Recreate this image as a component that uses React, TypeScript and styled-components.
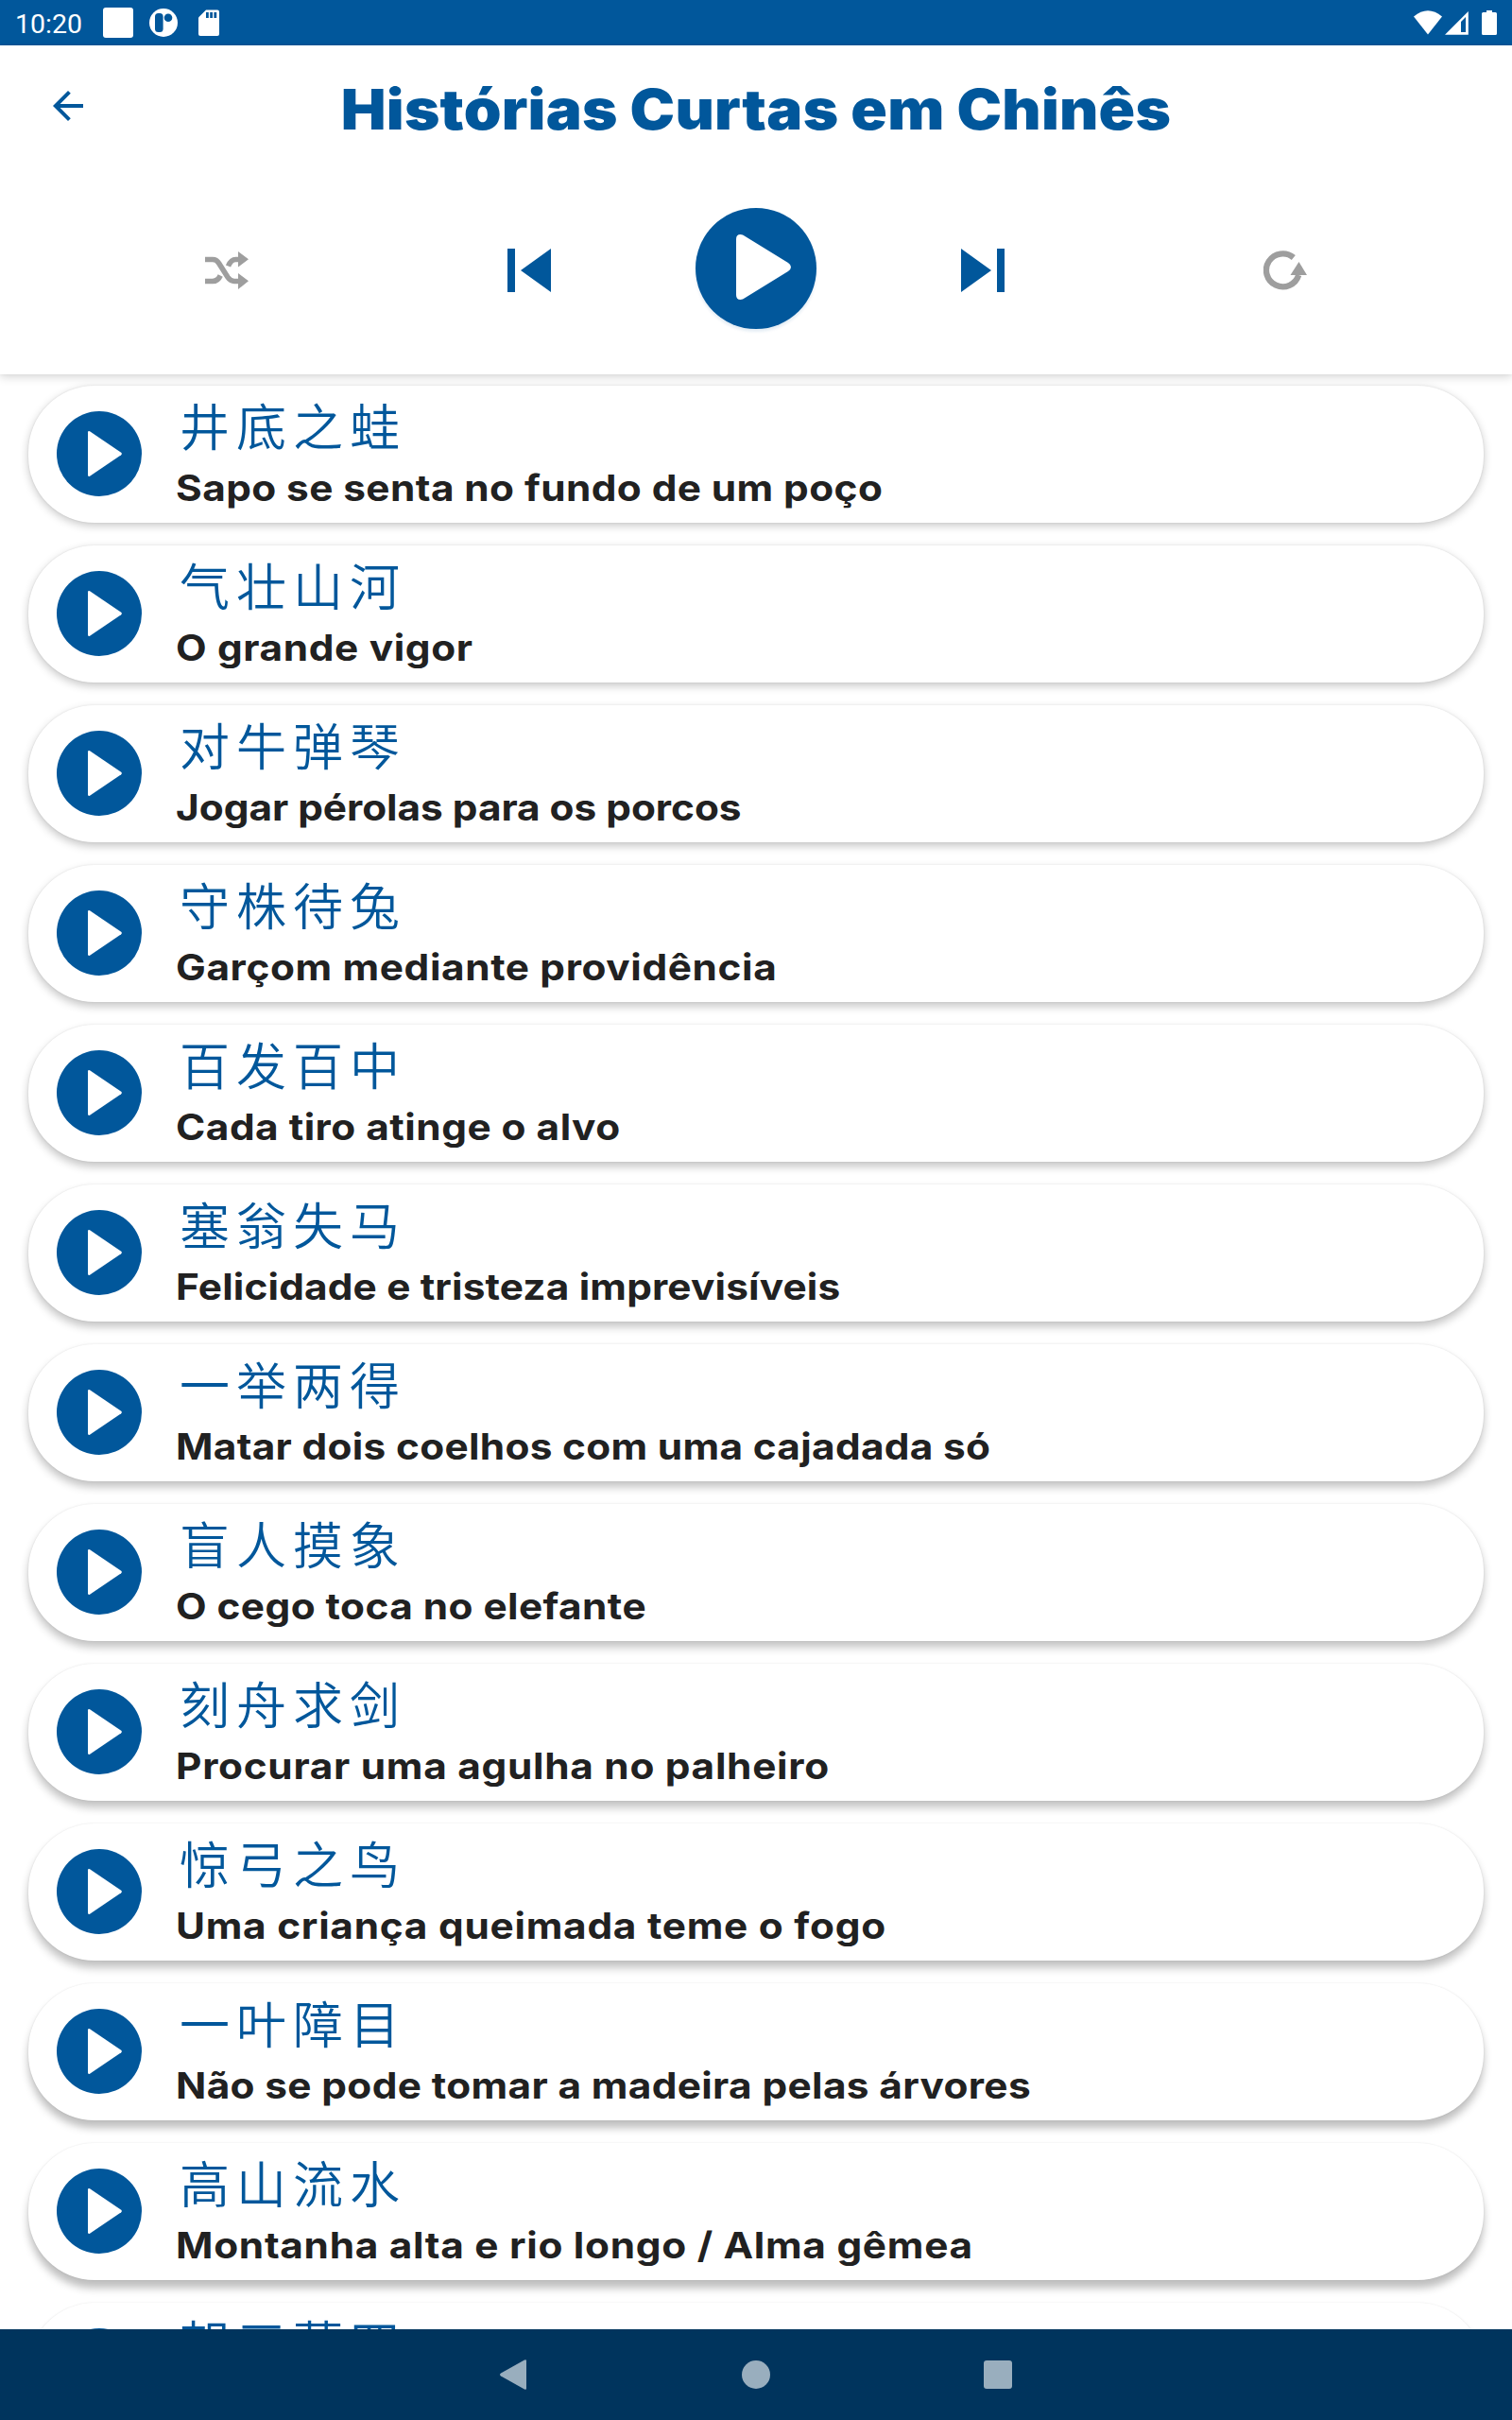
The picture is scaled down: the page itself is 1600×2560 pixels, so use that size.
import styled, { createGlobalStyle } from 'styled-components';

const blue = '#01579b';

const GlobalStyle = createGlobalStyle`
  * {
    box-sizing: border-box;
  }
  body {
    margin: 0;
    background: #fff;
  }
  svg {
    display: block;
  }
`;

const Screen = styled.div`
  width: 1600px;
  height: 2560px;
  display: flex;
  flex-direction: column;
  overflow: hidden;
  background: #fff;
  font-family: Inter, 'Noto Sans CJK SC', sans-serif;
`;

const StatusBar = styled.div`
  flex: none;
  height: 48px;
  padding: 0 16px;
  display: flex;
  align-items: center;
  justify-content: space-between;
  background: ${blue};
  color: #fff;
`;

const StatusGroup = styled.div`
  display: flex;
  align-items: center;
`;

const Clock = styled.span`
  width: 93px;
  font-family: Roboto, sans-serif;
  font-size: 28.5px;
  line-height: 48px;
  padding-top: 3px;
`;

const Header = styled.header`
  flex: none;
  height: 348px;
  z-index: 1;
  background: #fff;
  box-shadow: 0 3px 9px rgba(0, 0, 0, 0.16), 0 0 2px rgba(0, 0, 0, 0.06);
`;

const TitleRow = styled.div`
  height: 132px;
  padding: 0 48px;
  display: grid;
  grid-template-columns: 48px 1fr 48px;
  align-items: start;
`;

const BackButton = styled.button`
  margin: 40px 0 0;
  padding: 0;
  width: 48px;
  height: 48px;
  border: 0;
  background: none;
  color: ${blue};
`;

const Title = styled.h1`
  margin: 34px 0 0;
  font-size: 59px;
  line-height: 68px;
  font-weight: 900;
  letter-spacing: 0.22px;
  text-align: center;
  white-space: nowrap;
  color: ${blue};
  transform: scaleX(1.08);
`;

const Controls = styled.div`
  height: 212px;
  padding: 0 217px;
  display: grid;
  grid-template-columns: 46px 1fr 128px 1fr 46px;
  align-items: center;
`;

const ControlButton = styled.button<{ $muted?: boolean; $side?: 'left' | 'right' }>`
  padding: 0;
  border: 0;
  background: none;
  display: flex;
  justify-content: ${({ $side }) => ($side === 'left' ? 'flex-end' : 'flex-start')};
  padding-${({ $side }) => ($side === 'left' ? 'right' : 'left')}: ${({ $side }) => ($side ? 153 : 0)}px;
  color: ${({ $muted }) => ($muted ? '#9e9e9e' : blue)};
`;

const MainPlay = styled.button`
  width: 128px;
  height: 128px;
  margin-top: -5px;
  padding: 0;
  border: 0;
  border-radius: 50%;
  background: ${blue};
  box-shadow: 0 3px 3px rgba(1, 87, 155, 0.1);
`;

const StoryList = styled.ul`
  flex: 1;
  min-height: 0;
  overflow: hidden;
  margin: 0;
  padding: 12px 30px 0;
  display: flex;
  flex-direction: column;
  gap: 24px;
  list-style: none;
`;

const StoryCard = styled.li<{ $depth: number }>`
  flex: none;
  height: 145px;
  padding: 0 30px;
  display: flex;
  border-radius: 70px;
  background: #fff;
  box-shadow: 0 ${({ $depth }) => 3 + $depth * 0.5}px ${({ $depth }) => 10 - $depth * 0.1}px
      rgba(0, 0, 0, ${({ $depth }) => 0.22 + $depth * 0.003}),
    0 0 2px rgba(0, 0, 0, 0.1);
`;

const StoryPlay = styled.button`
  flex: none;
  width: 90px;
  height: 90px;
  margin-top: 27px;
  padding: 0;
  border: 0;
  border-radius: 50%;
  background: ${blue};
`;

const StoryText = styled.div`
  margin-left: 36px;
`;

const Hanzi = styled.p`
  margin: 5px 0 0;
  font-family: 'Noto Sans CJK SC', sans-serif;
  font-weight: 350;
  font-size: 53px;
  line-height: 72px;
  letter-spacing: 7px;
  padding-left: 4px;
  color: ${blue};
`;

const StoryName = styled.h2<{ $tracking: number }>`
  margin: 7px 0 0;
  font-size: 38.5px;
  line-height: 48px;
  font-weight: 700;
  letter-spacing: ${({ $tracking }) => $tracking}px;
  white-space: nowrap;
  color: #212121;
  transform: scaleX(1.1);
  transform-origin: left;
`;

const NavBar = styled.nav`
  flex: none;
  height: 96px;
  display: flex;
  justify-content: center;
  align-items: center;
  gap: 226px;
  z-index: 1;
  background: #00345d;
  color: #99aebe;
`;

type Story = {
  hanzi: string;
  name?: string;
  tracking?: number;
};

const stories: Story[] = [
  { hanzi: '井底之蛙', name: 'Sapo se senta no fundo de um poço', tracking: 0.37 },
  { hanzi: '气壮山河', name: 'O grande vigor', tracking: 0.57 },
  { hanzi: '对牛弹琴', name: 'Jogar pérolas para os porcos', tracking: -0.03 },
  { hanzi: '守株待兔', name: 'Garçom mediante providência', tracking: 0.56 },
  { hanzi: '百发百中', name: 'Cada tiro atinge o alvo', tracking: 0.44 },
  { hanzi: '塞翁失马', name: 'Felicidade e tristeza imprevisíveis', tracking: 0.14 },
  { hanzi: '一举两得', name: 'Matar dois coelhos com uma cajadada só', tracking: 0.28 },
  { hanzi: '盲人摸象', name: 'O cego toca no elefante', tracking: 0.39 },
  { hanzi: '刻舟求剑', name: 'Procurar uma agulha no palheiro', tracking: 0.64 },
  { hanzi: '惊弓之鸟', name: 'Uma criança queimada teme o fogo', tracking: 0.67 },
  { hanzi: '一叶障目', name: 'Não se pode tomar a madeira pelas árvores', tracking: 0.32 },
  { hanzi: '高山流水', name: 'Montanha alta e rio longo / Alma gêmea', tracking: 0.64 },
  { hanzi: '朝三暮四' }
];

function StoryItem({ story, depth }: { story: Story; depth: number }) {
  return (
    <StoryCard $depth={depth}>
      <StoryPlay>
        <svg width="90" height="90" viewBox="0 0 90 90" fill="#fff">
          <path d="M33 22.500q0-2 2-1.200L68.200 43.800q1.600 1.200 0 2.400L35 68.800q-2 .8-2-1.200z" />
        </svg>
      </StoryPlay>
      <StoryText>
        <Hanzi>{story.hanzi}</Hanzi>
        {story.name && <StoryName $tracking={story.tracking ?? 0}>{story.name}</StoryName>}
      </StoryText>
    </StoryCard>
  );
}

export default function App() {
  return (
    <>
      <GlobalStyle />
      <Screen>
        <StatusBar>
          <StatusGroup>
            <Clock>10:20</Clock>
            <svg width="130" height="48" viewBox="109 0 130 48" fill="#fff">
              <rect x="109" y="8" width="32" height="32" rx="3" />
              <circle cx="173" cy="24" r="15" />
              <rect x="164" y="14" width="8.600" height="20" rx="3.500" fill={blue} />
              <circle cx="178" cy="18.700" r="4.300" fill={blue} />
              <path d="M218 10.500h12a2 2 0 0 1 2 2V36a2 2 0 0 1-2 2h-18a2 2 0 0 1-2-2V18.500z" />
              <path d="M218 13h2.800v6H218zM222.200 13h2.800v6h-2.800zM226.400 13h2.800v6h-2.800z" fill={blue} />
            </svg>
          </StatusGroup>
          <svg width="88" height="48" viewBox="1496 0 88 48" fill="#fff">
            <path d="M1496 17.500q15-12.500 30 0L1511 36.500z" />
            <path d="M1553.800 12v24.800H1529zM1551 18l-5 5v11h5z" fillRule="evenodd" />
            <path d="M1573 11h6v2h3.500a1.500 1.500 0 0 1 1.500 1.500v21a1.500 1.500 0 0 1-1.500 1.500h-13a1.500 1.500 0 0 1-1.500-1.500v-21a1.500 1.500 0 0 1 1.500-1.500h3.500z" />
          </svg>
        </StatusBar>

        <Header>
          <TitleRow>
            <BackButton>
              <svg width="48" height="48" viewBox="0 0 24 24" fill="currentColor">
                <path d="M20 11H7.800l5.600-5.600L12 4l-8 8 8 8 1.400-1.400L7.800 13H20z" />
              </svg>
            </BackButton>
            <Title>Histórias Curtas em Chinês</Title>
          </TitleRow>
          <Controls>
            <ControlButton $muted>
              <svg width="46" height="42" viewBox="27 15 46 42" fill="none" stroke="currentColor" strokeWidth="5.600">
                <path d="M27 24.500h8c3 0 5 1.300 6.500 3.800l9.500 15c2 3 3.500 4.200 7 4.200h5" />
                <path d="M27 47.500h8c4 0 6.200-1.500 8.200-6M51.500 31.500c2-4.800 4-7 8-7H63" />
                <path d="M62 16l11 8.200-11 8.300zM62 39l11 8.300L62 56z" fill="currentColor" stroke="none" />
              </svg>
            </ControlButton>
            <ControlButton $side="left">
              <svg width="46" height="46" viewBox="0 0 46 46" fill="currentColor">
                <path d="M0 0h8v46H0zM46 0v46L14 23z" />
              </svg>
            </ControlButton>
            <MainPlay>
              <svg width="128" height="128" viewBox="0 0 128 128" fill="#fff">
                <path d="M43 33q0-5 4.500-5 2.500 0 5 2l45.500 28q3 2 3 4.500t-3 4.500L52.500 95q-2.500 2-5 2-4.500 0-4.500-5z" />
              </svg>
            </MainPlay>
            <ControlButton $side="right">
              <svg width="46" height="46" viewBox="0 0 46 46" fill="currentColor">
                <path d="M38 0h8v46h-8zM0 0v46l32-23z" />
              </svg>
            </ControlButton>
            <ControlButton $muted>
              <svg width="46" height="42" viewBox="27 15 46 42" fill="none" stroke="currentColor" strokeWidth="6.300">
                <path d="M58.800 22.500A17.500 17.500 0 1 0 64.200 41" />
                <path d="M64.500 27L73 41H55.500z" fill="currentColor" stroke="none" />
              </svg>
            </ControlButton>
          </Controls>
        </Header>

        <StoryList>
          {stories.map((story, i) => (
            <StoryItem key={story.hanzi} story={story} depth={i} />
          ))}
        </StoryList>

        <NavBar>
          <svg width="30" height="32" viewBox="0 0 30 32" fill="currentColor">
            <path d="M1 14.500L26 .5q2-1 2 1v29q0 2-2 1L1 17.500q-2-1.500 0-3z" />
          </svg>
          <svg width="30" height="30" viewBox="0 0 30 30" fill="currentColor">
            <circle cx="15" cy="15" r="15" />
          </svg>
          <svg width="30" height="30" viewBox="0 0 30 30" fill="currentColor">
            <rect width="30" height="30" rx="3" />
          </svg>
        </NavBar>
      </Screen>
    </>
  );
}
